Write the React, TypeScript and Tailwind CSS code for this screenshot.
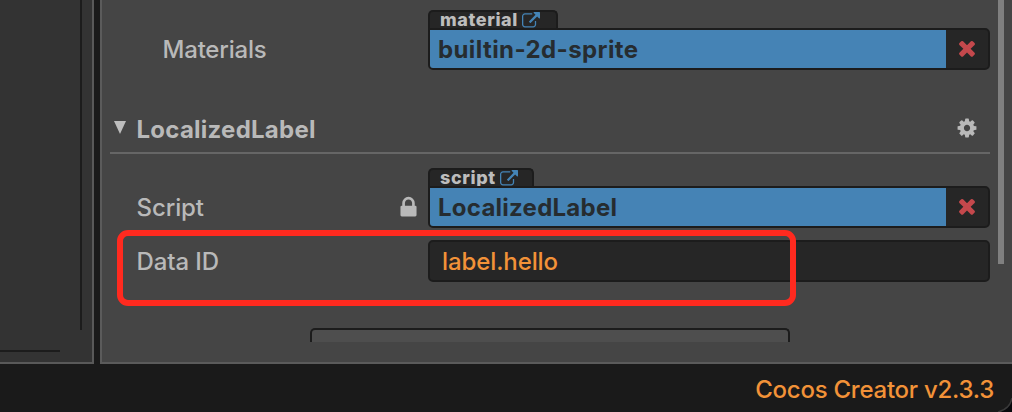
import type { ReactNode } from "react";

const GLYPHS = {
  link: "M1408 928v320q0 119-84.5 203.5t-203.5 84.5h-832q-119 0-203.5-84.5t-84.5-203.5v-832q0-119 84.5-203.5t203.5-84.5h704q14 0 23 9t9 23v64q0 14-9 23t-23 9h-704q-66 0-113 47t-47 113v832q0 66 47 113t113 47h832q66 0 113-47t47-113v-320q0-14 9-23t23-9h64q14 0 23 9t9 23zm384-864v512q0 26-19 45t-45 19-45-19l-176-176-652 652q-10 10-23 10t-23-10l-114-114q-10-10-10-23t10-23l652-652-176-176q-19-19-19-45t19-45 45-19h512q26 0 45 19t19 45z",
  times: "M1490 1322q0 40-28 68l-136 136q-28 28-68 28t-68-28l-294-294-294 294q-28 28-68 28t-68-28l-136-136q-28-28-28-68t28-68l294-294-294-294q-28-28-28-68t28-68l136-136q28-28 68-28t68 28l294 294 294-294q28-28 68-28t68 28l136 136q28 28 28 68t-28 68l-294 294 294 294q28 28 28 68z",
  cog: "M1152 896q0-106-75-181t-181-75-181 75-75 181 75 181 181 75 181-75 75-181zm512-109v222q0 12-8 23t-20 13l-185 28q-19 54-39 91 35 50 107 138 10 12 10 25t-9 23q-27 37-99 108t-94 71q-12 0-26-9l-138-108q-44 23-91 38-16 136-29 186-7 28-36 28h-222q-14 0-24.5-8.5t-11.5-21.5l-28-184q-49-16-90-37l-141 107q-10 9-25 9-14 0-25-11-126-114-165-168-7-10-7-23 0-12 8-23 15-21 51-66.5t54-70.5q-27-50-41-99l-183-27q-13-2-21-12.5t-8-23.5v-222q0-12 8-23t19-13l186-28q14-46 39-92-40-57-107-138-10-12-10-24 0-10 9-23 26-36 98.5-107.5t94.5-71.5q13 0 26 10l138 107q44-23 91-38 16-136 29-186 7-28 36-28h222q14 0 24.5 8.5t11.5 21.5l28 184q49 16 90 37l142-107q9-9 24-9 13 0 25 10 129 119 165 170 7 8 7 22 0 12-8 23-15 21-51 66.5t-54 70.5q26 50 41 98l183 28q13 2 21 12.5t8 23.5z",
  lock: "M640 768h512v-192q0-106-75-181t-181-75-181 75-75 181v192zm832 96v576q0 40-28 68t-68 28h-960q-40 0-68-28t-28-68v-576q0-40 28-68t68-28h32v-192q0-184 132-316t316-132 316 132 132 316v192h32q40 0 68 28t28 68z",
};

function Icon({ name, className }: { name: keyof typeof GLYPHS; className: string }) {
  return (
    <svg viewBox="0 0 1792 1792" fill="currentColor" className={`shrink-0 ${className}`}>
      <path d={GLYPHS[name]} />
    </svg>
  );
}

function AssetField({ type, tabClass, children }: { type: string; tabClass: string; children: ReactNode }) {
  return (
    <div className="flex w-[562px] flex-col">
      <div className={`flex h-[18px] items-center rounded-t-[5px] border-2 border-b-0 border-[#1c1c1c] bg-[#262626] pl-[10px] ${tabClass}`}>
        <span className="text-[18px] leading-4 font-extrabold text-[#bdbdbd]">{type}</span>
        <Icon name="link" className="mt-[2px] ml-1 size-[18px] text-[#4484b6]" />
      </div>
      <div className="flex h-[42px] overflow-hidden rounded-[5px] rounded-tl-none border-2 border-[#1c1c1c] bg-[#262626]">
        <div className="flex w-[516px] items-center bg-[#4583b5] pt-px pl-2 text-[24px] leading-none font-bold text-[#262c30]">
          {children}
        </div>
        <div className="flex flex-1 items-center justify-center pb-[2px]">
          <Icon name="times" className="size-6 text-[#c4484c]" />
        </div>
      </div>
    </div>
  );
}

export default function App() {
  return (
    <div className="relative flex h-[412px] w-[1012px] flex-col overflow-hidden bg-[#1a1a1a] font-['Inter',sans-serif] text-[24px] leading-none font-[450] text-[#b9b9b9]">
      <div className="flex h-[364px] gap-[6px]">
        <div className="flex w-[94px] flex-col border-r-2 border-b-2 border-[#595959] bg-[#333333]">
          <div className="h-[330px] w-[82px] border-r-2 border-[#1c1c1c]" />
          <div className="mt-5 h-[2px] w-[60px] bg-[#1c1c1c]" />
        </div>
        <div className="flex flex-1 border-b-2 border-l-2 border-[#5b5b5b] bg-[#454545]">
          <div className="flex w-[888px] flex-col pl-2">
            <div className="mt-[10px] flex h-[60px]">
              <div className="flex w-[318px] pt-7 pl-[52.5px] tracking-[-0.2px]">Materials</div>
              <AssetField type="material" tabClass="w-[130px] tracking-[0.6px]">
                <span className="tracking-[0.4px]">builtin-2d-sprite</span>
              </AssetField>
            </div>
            <div className="mt-[34px] flex h-[50px] items-center border-b-2 border-[#666666]">
              <svg viewBox="0 0 12 13" className="mb-[2px] ml-1 h-[13px] w-3" fill="#bdbdbd">
                <path d="M0 0H12L6 13Z" />
              </svg>
              <span className="ml-[10.5px] pt-[3px] font-bold tracking-[0.25px]">LocalizedLabel</span>
              <Icon name="cog" className="mr-3 ml-auto size-[22px]" />
            </div>
            <div className="mt-[14px] flex h-[60px]">
              <div className="flex w-[318px] justify-between pt-7 pr-[7px] pl-[26.5px]">
                <span className="tracking-[-0.1px]">Script</span>
                <Icon name="lock" className="-mt-px size-[25px]" />
              </div>
              <AssetField type="script" tabClass="w-[106px] tracking-[0.6px]">
                <span className="tracking-[0.25px]">LocalizedLabel</span>
              </AssetField>
            </div>
            <div className="mt-3 flex h-[42px] items-center">
              <div className="w-[318px] pt-[2px] pl-[26.5px] tracking-[-0.1px]">Data ID</div>
              <div className="flex h-full w-[562px] items-center rounded-[5px] border-2 border-[#1c1c1c] bg-[#262626] pt-[2px] pl-3 tracking-[-0.1px] text-[#f29238]">
                label.hello
              </div>
            </div>
            <div className="mt-[46px] ml-[200px] h-[14px] w-[480px] rounded-t-[5px] border-2 border-b-0 border-[#1c1c1c] bg-[#4e4e4e]" />
          </div>
          <div className="ml-2 h-[264px] w-[6px] bg-[#808080]" />
        </div>
      </div>
      <div className="flex h-12 items-center justify-end pt-[3px] pr-[18px] tracking-[-0.25px] text-[#f29238]">
        Cocos Creator v2.3.3
      </div>
      <div className="absolute top-[230px] left-[117px] h-[76px] w-[679px] rounded-[11px] border-[6px] border-[#ff2a1f]" />
      <svg viewBox="0 0 14 14" className="absolute right-0 bottom-0 size-[14px]">
        <path d="M14 0Q12 11 0 14H14Z" fill="#08090c" />
        <path d="M14 0Q12 11 0 14" fill="none" stroke="#3a3a3a" strokeWidth="1.5" />
      </svg>
    </div>
  );
}
